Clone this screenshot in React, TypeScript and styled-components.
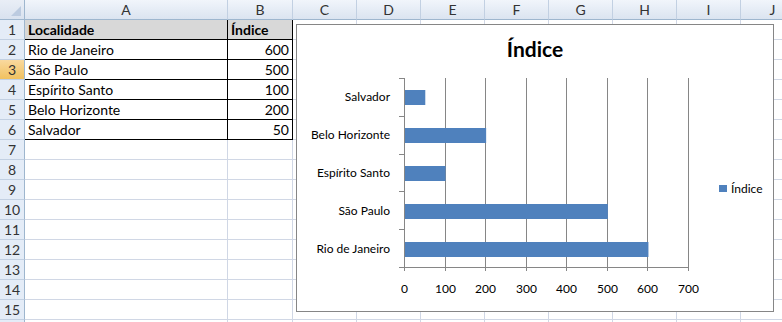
import React from "react";
import styled, { createGlobalStyle, css } from "styled-components";

const GlobalStyle = createGlobalStyle`
  html, body { margin: 0; padding: 0; background: #fff; }
  body { font-family: Lato, "Open Sans", sans-serif; }
`;

const columns = ["A", "B", "C", "D", "E", "F", "G", "H", "I", "J"];
const rowCount = 16;
const lastLabelledRow = 15;

const data: { name: string; value: number }[] = [
  { name: "Rio de Janeiro", value: 600 },
  { name: "São Paulo", value: 500 },
  { name: "Espírito Santo", value: 100 },
  { name: "Belo Horizonte", value: 200 },
  { name: "Salvador", value: 50 },
];

const SELECTED_ROW = 3;

export default function App() {
  const cells: React.ReactNode[] = [];

  cells.push(<Corner key="corner"><CornerMark /></Corner>);
  columns.forEach((c) => cells.push(<ColHeader key={"h" + c}>{c}</ColHeader>));

  for (let r = 1; r <= rowCount; r++) {
    cells.push(
      <RowHeader key={"r" + r} $selected={r === SELECTED_ROW}>
        {r <= lastLabelledRow ? r : ""}
      </RowHeader>
    );
    columns.forEach((c) => {
      const inTable = r <= data.length + 1 && (c === "A" || c === "B");
      let text = "";
      if (r === 1 && c === "A") text = "Localidade";
      if (r === 1 && c === "B") text = "Índice";
      if (r > 1 && inTable) {
        const row = data[r - 2];
        text = c === "A" ? row.name : String(row.value);
      }
      cells.push(
        <Cell
          key={c + r}
          $table={inTable}
          $head={inTable && r === 1}
          $number={inTable && r > 1 && c === "B"}
        >
          {text}
        </Cell>
      );
    });
  }

  return (
    <>
      <GlobalStyle />
      <Sheet>
        {cells}
        <Chart>
          <ChartTitle>Índice</ChartTitle>
          <ChartBody>
            <BarPlot />
            <Legend>
              <LegendSwatch />
              <span>Índice</span>
            </Legend>
          </ChartBody>
        </Chart>
      </Sheet>
    </>
  );
}

function BarPlot() {
  const x0 = 107;
  const top = 10;
  const bottom = 199;
  const max = 700;
  const scale = 284 / max;
  const band = (bottom - top) / data.length;
  const ticks = [0, 100, 200, 300, 400, 500, 600, 700];
  const cats = [...data].reverse();

  return (
    <svg width={412} height={243} viewBox="0 0 412 243">
      {ticks.map((t) => {
        const x = Math.round(x0 + t * scale) + 0.5;
        return (
          <g key={t}>
            <line x1={x} y1={top} x2={x} y2={bottom + 4} stroke="#868686" strokeWidth={1} />
            <text x={x} y={225} textAnchor="middle" fontSize={12} fill="#000" fontFamily="Lato, sans-serif">
              {t}
            </text>
          </g>
        );
      })}
      <line x1={x0} y1={bottom + 0.5} x2={Math.round(x0 + max * scale) + 1} y2={bottom + 0.5} stroke="#868686" />
      {Array.from({ length: data.length + 1 }).map((_, i) => {
        const y = Math.round(top + i * band) + 0.5;
        return <line key={i} x1={x0 - 5} y1={y} x2={x0 + 0.5} y2={y} stroke="#868686" />;
      })}
      {cats.map((d, i) => {
        const cy = top + i * band + band / 2;
        return (
          <g key={d.name}>
            <rect x={x0 + 1} y={Math.round(cy - 6.5)} width={d.value * scale} height={15} fill="#4F81BD" />
            <text x={93} y={cy + 4.5} textAnchor="end" fontSize={12} fill="#000" fontFamily="Lato, sans-serif">
              {d.name}
            </text>
          </g>
        );
      })}
    </svg>
  );
}

const Sheet = styled.div`
  position: relative;
  width: 782px;
  height: 322px;
  overflow: hidden;
  display: grid;
  grid-template-columns: 25px 203px 65px repeat(8, 64px);
  grid-auto-rows: 20px;
  font-family: Lato, "Open Sans", sans-serif;
  font-size: 14px;
  color: #000;
`;

const headerBase = css`
  box-sizing: border-box;
  display: flex;
  align-items: center;
  justify-content: center;
  color: #333;
  font-size: 14px;
  border-right: 1px solid #9eb6ce;
  border-bottom: 1px solid #9eb6ce;
`;

const Corner = styled.div`
  ${headerBase};
  position: relative;
  background: linear-gradient(#e9eef6, #d9e2ef);
`;

const CornerMark = styled.div`
  position: absolute;
  right: 3px;
  bottom: 3px;
  width: 0;
  height: 0;
  border-left: 10px solid transparent;
  border-bottom: 10px solid #bccbe0;
`;

const ColHeader = styled.div`
  ${headerBase};
  background: linear-gradient(#f1f5fb, #dbe4f0);
  border-right-color: #c2d0e2;
`;

const RowHeader = styled.div<{ $selected?: boolean }>`
  ${headerBase};
  border-bottom-color: #c2d0e2;
  background: ${(p) =>
    p.$selected ? "linear-gradient(#f9d99f, #f1c15f)" : "#e4ecf7"};
`;

const Cell = styled.div<{ $table?: boolean; $head?: boolean; $number?: boolean }>`
  box-sizing: border-box;
  display: flex;
  align-items: flex-end;
  padding: 0 3px 1px 3px;
  white-space: nowrap;
  overflow: hidden;
  border-right: 1px solid #d0d7e5;
  border-bottom: 1px solid #d0d7e5;
  ${(p) =>
    p.$table &&
    css`
      border-right-color: #000;
      border-bottom-color: #000;
    `}
  ${(p) =>
    p.$head &&
    css`
      background: #d8d8d8;
      font-weight: 700;
    `}
  justify-content: ${(p) => (p.$number ? "flex-end" : "flex-start")};
`;

const Chart = styled.div`
  position: absolute;
  left: 296px;
  top: 24px;
  width: 478px;
  height: 288px;
  box-sizing: border-box;
  background: #fff;
  border: 1px solid #868686;
  display: flex;
  flex-direction: column;
`;

const ChartTitle = styled.div`
  height: 44px;
  display: flex;
  align-items: flex-end;
  justify-content: center;
  font-size: 21px;
  font-weight: 700;
  padding-bottom: 7px;
  box-sizing: border-box;
`;

const ChartBody = styled.div`
  display: flex;
  align-items: center;
  flex: 1;
`;

const Legend = styled.div`
  display: flex;
  align-items: center;
  gap: 4px;
  margin-left: 10px;
  margin-top: -2px;
  font-size: 12px;
`;

const LegendSwatch = styled.span`
  width: 8px;
  height: 7px;
  background: #4f81bd;
`;
